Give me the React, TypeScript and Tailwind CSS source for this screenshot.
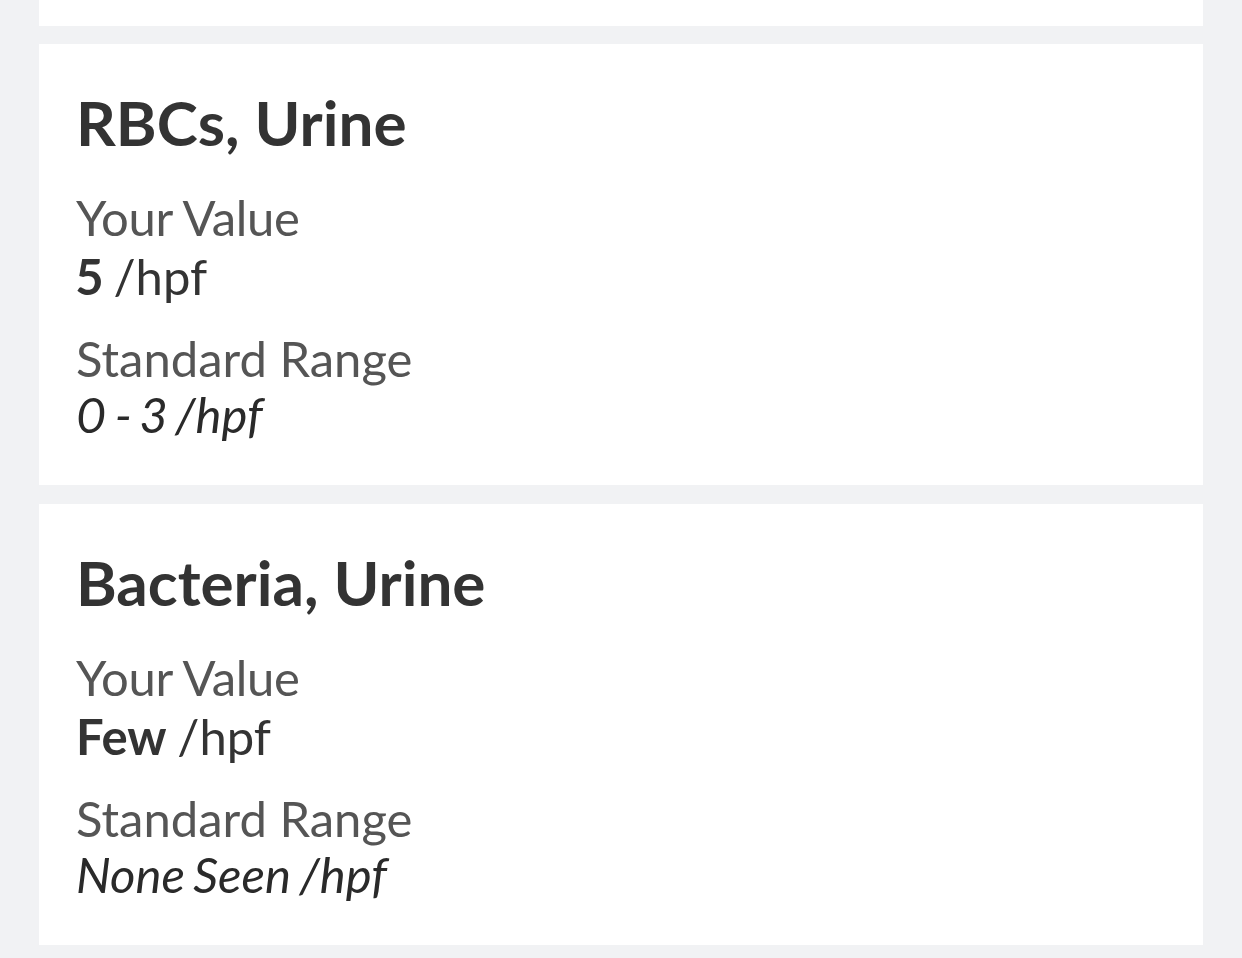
import React from "react";

type Item = { title: string; value: string; unit: string; range: string };

const items: Item[] = [
  { title: "RBCs, Urine", value: "5", unit: "/hpf", range: "0 - 3 /hpf" },
  { title: "Bacteria, Urine", value: "Few", unit: "/hpf", range: "None Seen /hpf" },
];

function Card({ item }: { item: Item }) {
  return (
    <div className="bg-white h-[441px] pl-[37px] pt-[47px] flex flex-col proportional-nums">
      <h2 className="text-[62px] leading-[62px] font-bold text-[#333333]">{item.title}</h2>
      <div className="mt-[34px] text-[49px] leading-[60px] text-[#555555] tracking-[-0.3px]">Your Value</div>
      <div className="text-[49px] leading-[59px] text-[#333333] [word-spacing:-2px]">
        <span className="font-bold">{item.value}</span> {item.unit}
      </div>
      <div className="mt-[24px] text-[49px] leading-[56px] text-[#555555]">Standard Range</div>
      <div className="text-[49px] leading-[56px] italic text-[#2a2a2a] [word-spacing:-3px]">{item.range}</div>
    </div>
  );
}

export default function App() {
  return (
    <div className="min-h-[958px] bg-[#f1f2f4] px-[39px] font-['Lato',sans-serif]">
      <div className="h-[26px] bg-white" />
      <div className="flex flex-col gap-[19px] pt-[18px]">
        {items.map((it) => (
          <Card key={it.title} item={it} />
        ))}
      </div>
    </div>
  );
}
